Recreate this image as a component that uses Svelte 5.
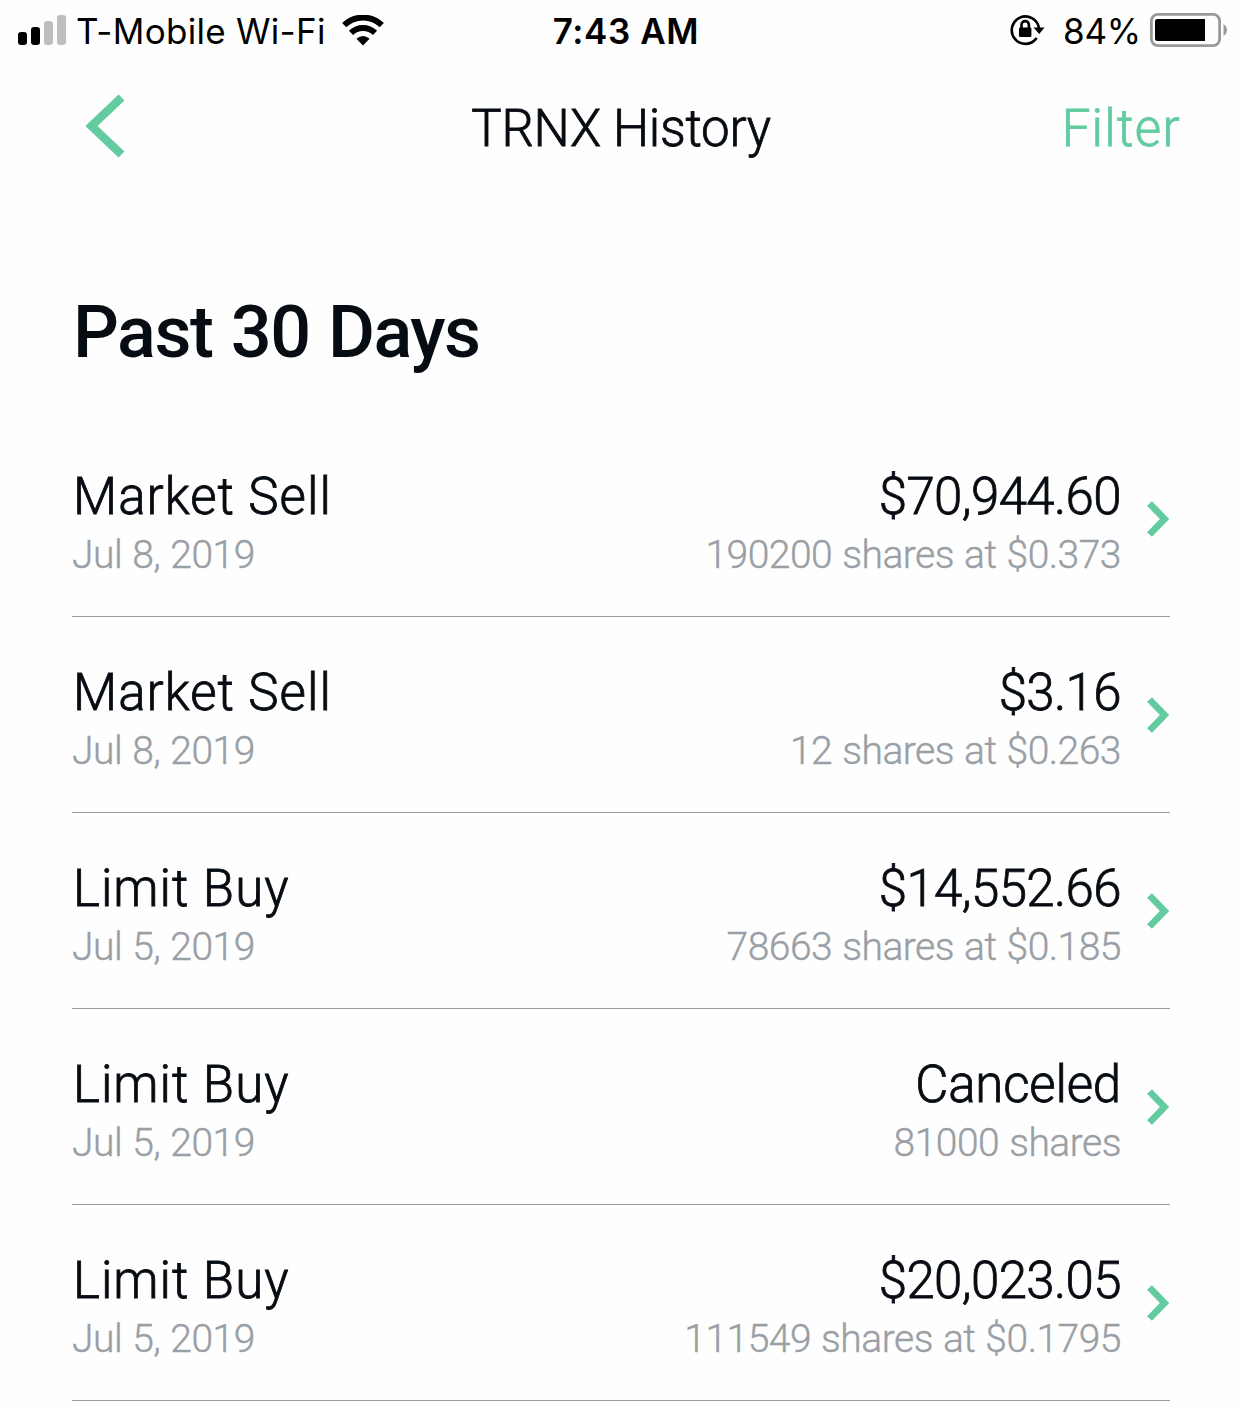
<script lang="ts">
  type Transaction = {
    type: string;
    date: string;
    amount: string;
    detail: string;
  };

  const transactions: Transaction[] = [
    { type: 'Market Sell', date: 'Jul 8, 2019', amount: '$70,944.60', detail: '190200 shares at $0.373' },
    { type: 'Market Sell', date: 'Jul 8, 2019', amount: '$3.16', detail: '12 shares at $0.263' },
    { type: 'Limit Buy', date: 'Jul 5, 2019', amount: '$14,552.66', detail: '78663 shares at $0.185' },
    { type: 'Limit Buy', date: 'Jul 5, 2019', amount: 'Canceled', detail: '81000 shares' },
    { type: 'Limit Buy', date: 'Jul 5, 2019', amount: '$20,023.05', detail: '111549 shares at $0.1795' },
  ];
</script>

<div class="screen">
  <div class="status-bar">
    <div class="status-left">
      <svg class="signal" width="48" height="30" viewBox="0 0 48 30">
        <rect x="0" y="17" width="9" height="13" rx="3" />
        <rect x="13" y="12" width="9" height="18" rx="3" />
        <rect class="off" x="26" y="6" width="9" height="24" rx="3" />
        <rect class="off" x="39" y="0" width="9" height="30" rx="3" />
      </svg>
      <span class="carrier">T-Mobile Wi-Fi</span>
      <svg class="wifi" width="42" height="31" viewBox="0 0 42 31">
        <path d="M2.2 10.2a27 27 0 0 1 37.6 0" />
        <path d="M9 17.9a17.4 17.4 0 0 1 24 0" />
        <path class="dot" d="M21 30.5l-6.6-6.7q6.6-5.4 13.2 0z" />
      </svg>
    </div>
    <span class="time">7:43 AM</span>
    <div class="status-right">
      <svg class="lock" width="35" height="32" viewBox="0 0 35 32">
        <path class="ring" d="M26.7 24A13.7 13.7 0 1 1 29 14" />
        <path d="M23.5 13.5h11l-5.3 6.4z" />
        <rect x="9" y="13.5" width="12.4" height="9.5" rx="1.2" />
        <path class="shackle" d="M11.5 14v-3.2a3.7 3.7 0 0 1 7.4 0V14" />
      </svg>
      <span class="percent">84%</span>
      <svg class="battery" width="78" height="34" viewBox="0 0 78 34">
        <rect class="case" x="1.4" y="1.4" width="68.2" height="31.2" rx="6.5" />
        <path d="M7.5 6H55v22H7.5A2.5 2.5 0 0 1 5 25.5V8.5A2.5 2.5 0 0 1 7.5 6z" />
        <path class="cap" d="M73.5 11c4.6 2.5 4.6 9.5 0 12z" />
      </svg>
    </div>
  </div>

  <header class="nav-bar">
    <button class="back" aria-label="Back">
      <svg width="40" height="64" viewBox="0 0 40 64">
        <path d="M36.5 3.5L6.5 32l30 28.5" />
      </svg>
    </button>
    <h1>TRNX History</h1>
    <button class="filter">Filter</button>
  </header>

  <main>
    <h2>Past 30 Days</h2>
    <ul>
      {#each transactions as item}
        <li>
          <div class="info">
            <span class="type">{item.type}</span>
            <span class="sub">{item.date}</span>
          </div>
          <div class="info value">
            <span class="amount" class:word={!item.amount.startsWith('$')}>{item.amount}</span>
            <span class="sub">{item.detail}</span>
          </div>
          <svg class="chevron" width="24" height="38" viewBox="0 0 24 38">
            <path d="M3.5 3.5L18.5 19l-15 15.5" />
          </svg>
        </li>
      {/each}
    </ul>
  </main>
</div>

<style>
  :global(body) {
    margin: 0;
    background: #fefefe;
  }

  .screen {
    width: 1242px;
    height: 1406px;
    overflow: hidden;
    font-family: Roboto, sans-serif;
    color: #070c12;
  }

  .status-bar {
    height: 61px;
    padding: 0 14px 0 18px;
    display: grid;
    grid-template-columns: 1fr auto 1fr;
    align-items: center;
    font-family: Inter, sans-serif;
    font-size: 35px;
    color: #000;
    white-space: nowrap;
    box-sizing: border-box;
  }

  .status-left,
  .status-right {
    display: flex;
    align-items: center;
  }

  .status-right {
    justify-content: flex-end;
  }

  .signal {
    margin-bottom: 1px;
  }

  .off {
    fill: #bebebe;
  }

  .carrier {
    margin-left: 10px;
    letter-spacing: 0.3px;
  }

  .wifi {
    margin-left: 16px;
    fill: none;
    stroke: #000;
    stroke-width: 6;
  }

  .wifi .dot {
    fill: #000;
    stroke: none;
  }

  .time {
    padding-left: 6px;
    font-weight: 600;
    letter-spacing: 0.6px;
  }

  .lock {
    margin-bottom: 2px;
  }

  .ring,
  .shackle {
    fill: none;
    stroke: #000;
    stroke-width: 2.6;
  }

  .percent {
    margin: 0 9px 0 18px;
    letter-spacing: -0.2px;
  }

  .battery {
    margin-bottom: 1px;
  }

  .case {
    fill: none;
    stroke: #999;
    stroke-width: 2.8;
  }

  .cap {
    fill: #999;
  }

  .nav-bar {
    height: 134px;
    padding: 0 61px;
    display: grid;
    grid-template-columns: 1fr auto 1fr;
    align-items: center;
    box-sizing: border-box;
  }

  button {
    padding: 0;
    border: none;
    background: none;
    font: inherit;
  }

  .back {
    justify-self: start;
    margin: 0 0 4px 24px;
  }

  .back svg,
  .chevron {
    display: block;
    fill: none;
    stroke: #63cba0;
  }

  .back svg {
    stroke-width: 8.5;
  }

  h1,
  .filter,
  .type,
  .amount {
    font-size: 51px;
    font-weight: 300;
    -webkit-text-stroke: 0.8px currentColor;
  }

  h1 {
    margin: 0;
    letter-spacing: -0.3px;
  }

  .filter {
    justify-self: end;
    letter-spacing: 1.3px;
    color: #63cba0;
  }

  main {
    padding: 93px 72px 0;
  }

  h2 {
    margin: 0;
    height: 133px;
    padding-left: 1px;
    line-height: 90px;
    font-size: 72px;
    font-weight: 500;
    letter-spacing: -1.5px;
    word-spacing: 2px;
  }

  ul {
    margin: 0;
    padding: 0;
    list-style: none;
  }

  li {
    height: 196px;
    display: flex;
    align-items: center;
    border-bottom: 1px solid #999ca0;
    box-sizing: border-box;
  }

  .info {
    padding-top: 9px;
    display: flex;
    flex-direction: column;
  }

  .value {
    margin-left: auto;
    align-items: flex-end;
  }

  .type,
  .amount {
    line-height: 64px;
  }

  .type {
    padding-left: 1px;
    letter-spacing: 1px;
  }

  .amount {
    letter-spacing: -0.6px;
  }

  .amount.word {
    letter-spacing: -0.2px;
  }

  .sub {
    font-size: 39px;
    line-height: 52px;
    font-weight: 300;
    letter-spacing: -0.5px;
    word-spacing: 1px;
    color: #999fa5;
    -webkit-text-stroke: 0.4px currentColor;
  }

  .chevron {
    margin-left: 25px;
    stroke-width: 6.8;
  }
</style>
